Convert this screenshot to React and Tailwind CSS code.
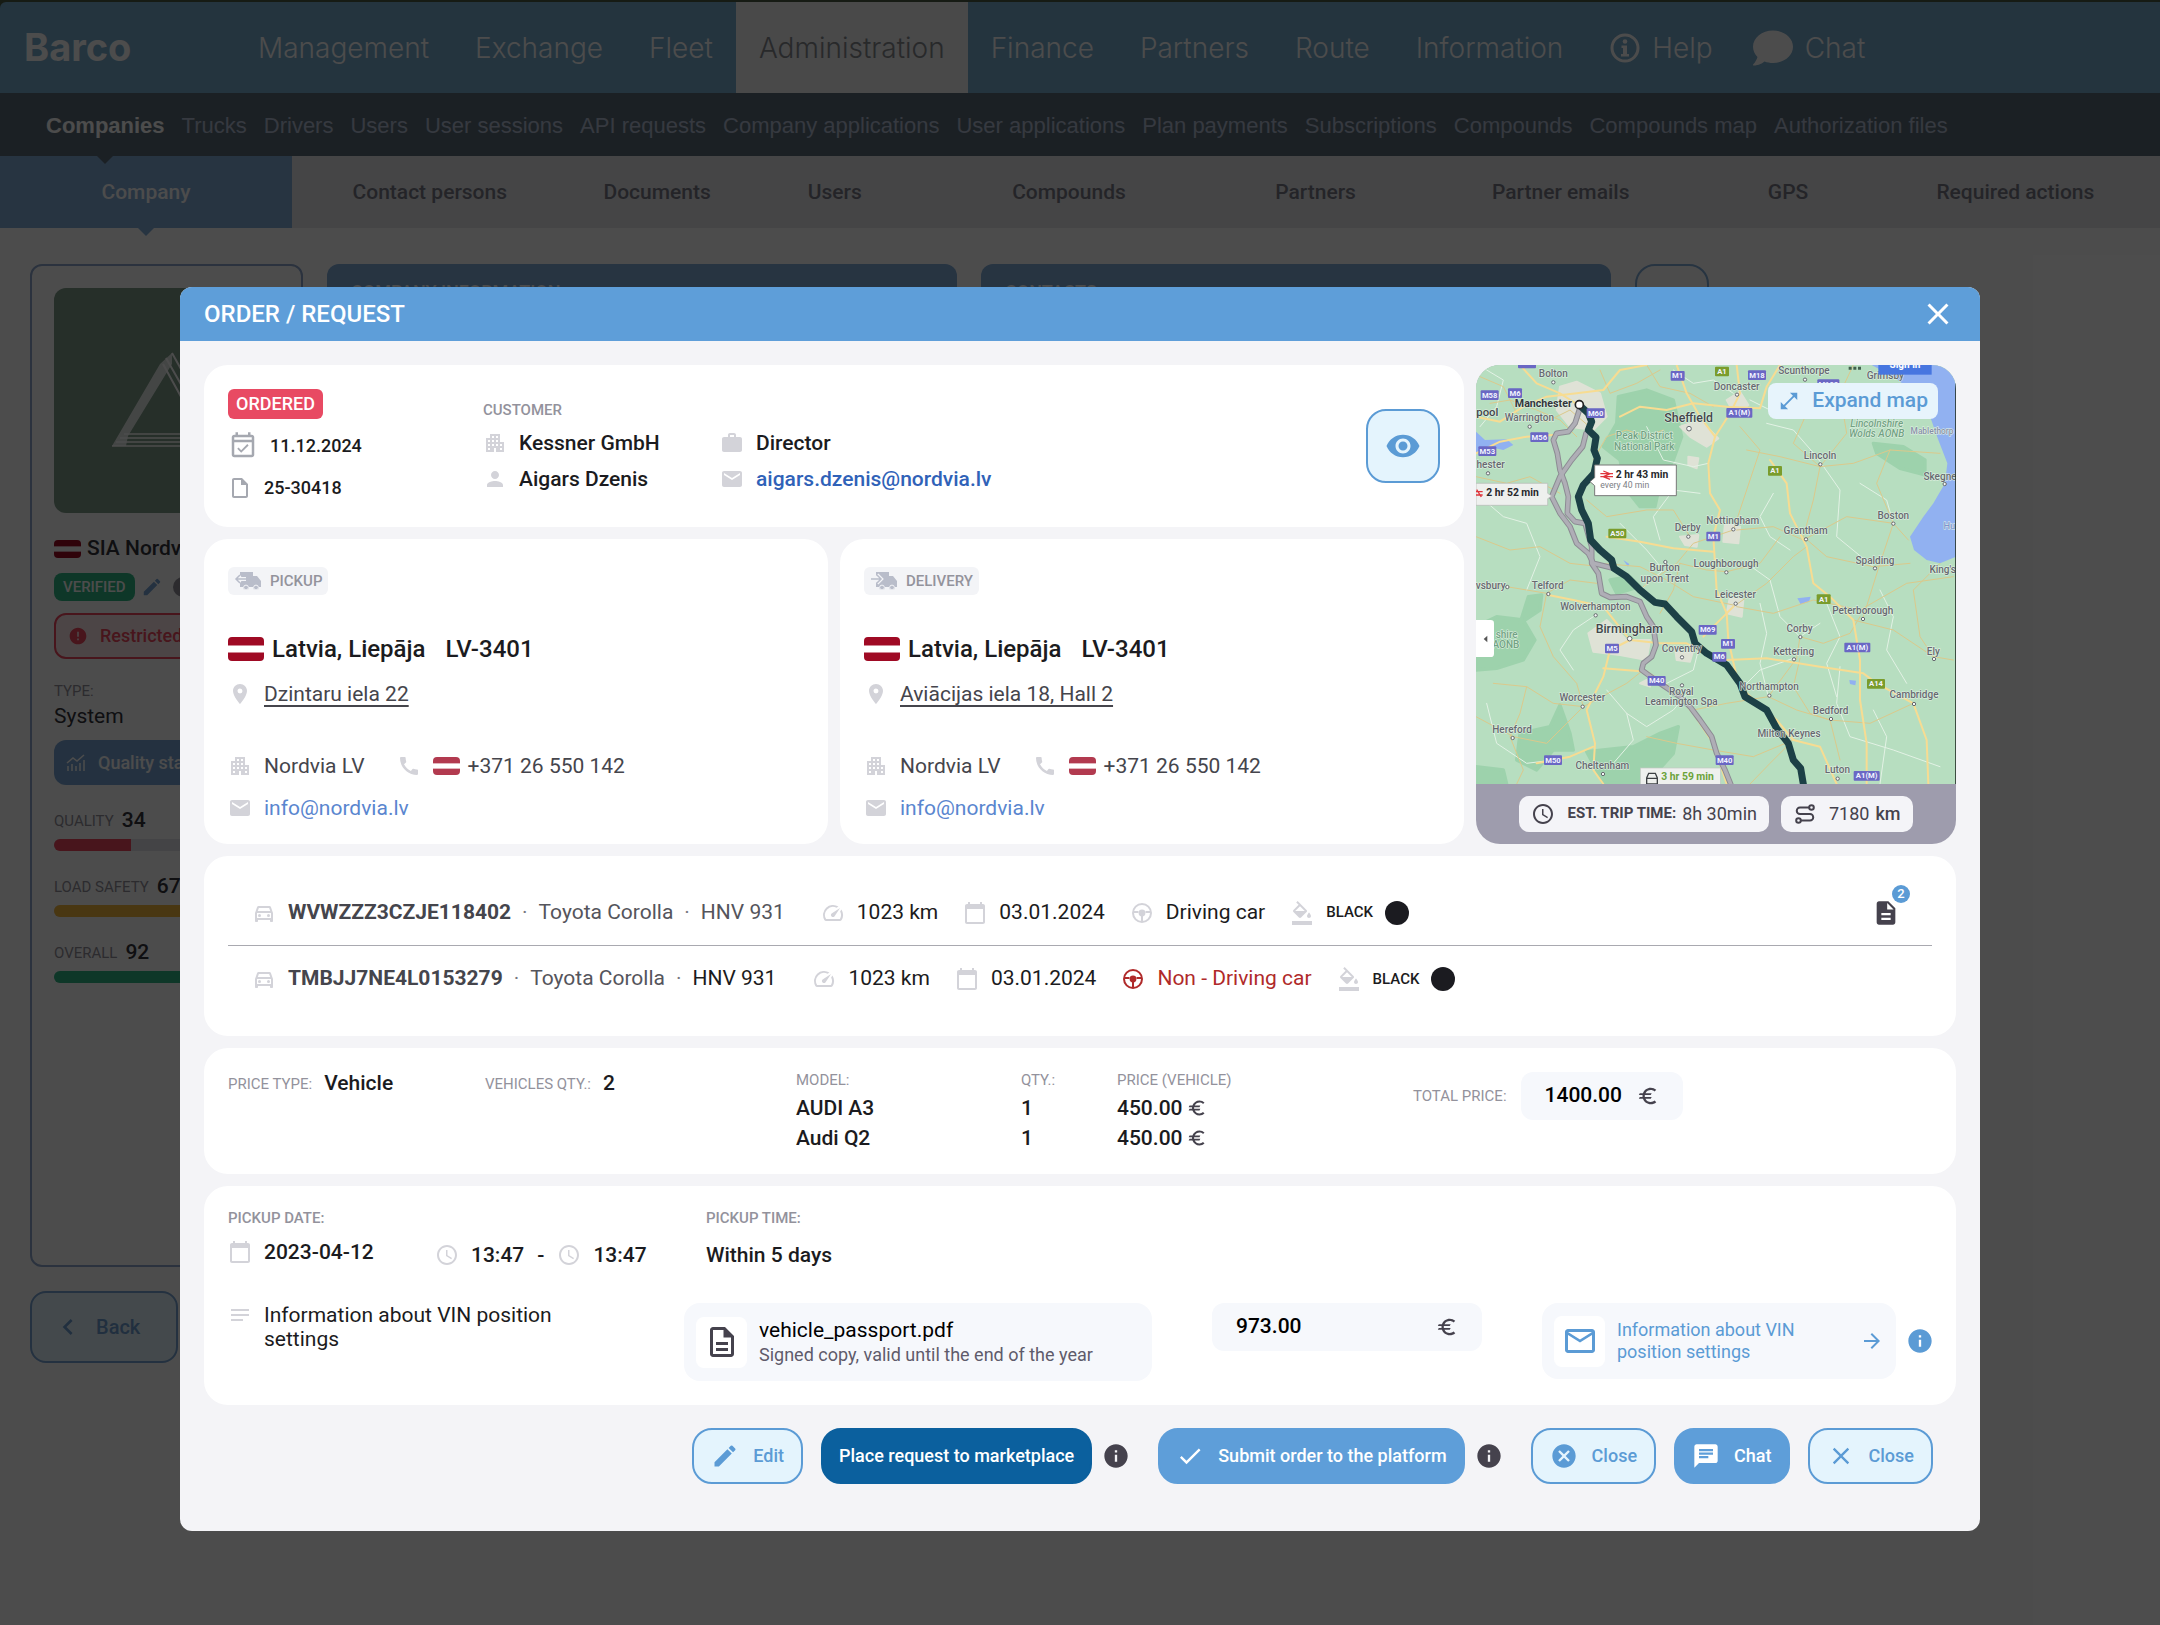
import {
  MdApartment,
  MdArrowForward,
  MdCalendarToday,
  MdCall,
  MdCancel,
  MdChat,
  MdCheck,
  MdChevronLeft,
  MdClose,
  MdDescription,
  MdEdit,
  MdEmail,
  MdError,
  MdEuro,
  MdFormatColorFill,
  MdInfo,
  MdLocationOn,
  MdNotes,
  MdOpenInFull,
  MdOutlineDescription,
  MdOutlineDirectionsCar,
  MdOutlineEmail,
  MdOutlineEventAvailable,
  MdOutlineInsertDriveFile,
  MdPerson,
  MdSchedule,
  MdSpeed,
  MdVisibility,
  MdWork,
} from "react-icons/md";
import { FaComment } from "react-icons/fa";
import clsx from "clsx";

const mainNav = [
  "Management",
  "Exchange",
  "Fleet",
  "Administration",
  "Finance",
  "Partners",
  "Route",
  "Information",
];

const subNav = [
  "Companies",
  "Trucks",
  "Drivers",
  "Users",
  "User sessions",
  "API requests",
  "Company applications",
  "User applications",
  "Plan payments",
  "Subscriptions",
  "Compounds",
  "Compounds map",
  "Authorization files",
];

const tabs = [
  "Company",
  "Contact persons",
  "Documents",
  "Users",
  "Compounds",
  "Partners",
  "Partner emails",
  "GPS",
  "Required actions",
];

const scores = [
  { label: "QUALITY", value: 34, color: "bg-[#f0485f]" },
  { label: "LOAD SAFETY", value: 67, color: "bg-[#f5b83d]" },
  { label: "OVERALL", value: 92, color: "bg-[#2fb985]" },
];

const vehicles = [
  { vin: "WVWZZZ3CZJE118402", model: "Toyota Corolla", plate: "HNV 931", driving: true, files: 2 },
  { vin: "TMBJJ7NE4L0153279", model: "Toyota Corolla", plate: "HNV 931", driving: false, files: 0 },
];

const prices = [
  { model: "AUDI A3", qty: 1, price: "450.00" },
  { model: "Audi Q2", qty: 1, price: "450.00" },
];

/* ---------- small drawings ---------- */

function Flag({ className }) {
  return (
    <svg viewBox="0 0 36 24" preserveAspectRatio="none" className={clsx("shrink-0 rounded-sm", className)}>
      <rect width="36" height="24" fill="#9f0a24" />
      <rect y="8.5" width="36" height="7" fill="#fff" />
    </svg>
  );
}

function SteeringIcon({ className }) {
  return (
    <svg viewBox="0 0 24 24" fill="none" className={className}>
      <circle cx="12" cy="12" r="9" stroke="currentColor" strokeWidth="2" />
      <circle cx="12" cy="12" r="3.4" fill="currentColor" />
      <path d="M3.5 11h5M15.500 11h5M12 14v6.500" stroke="currentColor" strokeWidth="2" />
    </svg>
  );
}

function TruckIcon({ back }) {
  return (
    <svg viewBox="0 0 28 22" className="h-[22px] w-7" fill="none">
      <path
        d="M6 2h13v4h4l4 5v6h-2a3 3 0 0 1-6 0h-4a3 3 0 0 1-6 0H6z"
        fill="#b9bdca"
      />
      <circle cx="12" cy="17.500" r="2.400" fill="#b9bdca" stroke="#f3f4f7" />
      <circle cx="22" cy="17.500" r="2.400" fill="#b9bdca" stroke="#f3f4f7" />
      <path
        d={back ? "M12 9H2M6 5L2 9l4 4" : "M1 9h10M7 5l4 4-4 4"}
        stroke="#f3f4f7"
        strokeWidth="4"
      />
      <path
        d={back ? "M12 9H2M6 5L2 9l4 4" : "M1 9h10M7 5l4 4-4 4"}
        stroke="#b9bdca"
        strokeWidth="1.500"
      />
    </svg>
  );
}

function RouteIcon() {
  return (
    <svg viewBox="0 0 24 24" className="size-6" fill="none" stroke="#45424d" strokeWidth="2">
      <circle cx="18.500" cy="5.500" r="2.300" />
      <circle cx="5.500" cy="18.500" r="2.300" />
      <path d="M16 5.500H7a3.250 3.250 0 0 0 0 6.500h10a3.250 3.250 0 0 1 0 6.500H8" />
    </svg>
  );
}

function HelpIcon() {
  return (
    <svg viewBox="0 0 30 30" className="size-[30px]" fill="none">
      <circle cx="15" cy="15" r="13" stroke="#fff" strokeWidth="3" />
      <circle cx="15" cy="8.500" r="2.300" fill="#fff" />
      <path d="M11.500 12.500h5.500V21h2v2.500h-8V21h2v-6h-1.500z" fill="#fff" />
    </svg>
  );
}

function CompanyLogo() {
  return (
    <svg viewBox="0 0 225 225" className="aspect-square w-full rounded-xl bg-[#7f9d8a]" fill="none" stroke="#fff">
      <path d="M118 65L106 76L58 158L72 158L74 148L118 76Z" fill="#fff" stroke="none" opacity="0.8" />
      <path d="M118 65l52 93M112 70l50 88M109 76l44 80" strokeWidth="2" />
      <path d="M58 158h112M62 154h106M66 150h98M70 146h90" strokeWidth="1.500" />
    </svg>
  );
}

/* ---------- route map ---------- */

const forests = [
  "M475 140L560 120L640 150L665 260L640 330L600 400L585 470L540 470L500 420L480 330L430 290L470 220Z",
  "M48 830L110 800L190 810L225 870L190 930L110 955L48 960Z",
  "M300 1065L330 1150L340 1200L280 1200L230 1260L170 1230L180 1150L270 1130Z",
  "M1240 280L1330 290L1395 330L1395 375L1320 355L1250 310Z",
  "M380 1205L520 1190L600 1150L655 1130L640 1210L560 1300L430 1300Z",
  "M48 1250L130 1260L140 1302L48 1302Z",
  "M450 690L510 680L540 710L470 730Z",
  "M205 740L245 735L240 780L180 820Z",
];

const towns = [
  "M300 110L350 95L420 130L440 200L400 240L330 230L290 180Z",
  "M660 230L720 210L775 265L740 290L690 260Z",
  "M385 850L440 810L500 870L570 870L560 930L480 915L400 905Z",
  "M795 520L840 530L835 580L790 575Z",
  "M660 560L715 555L710 590L675 585Z",
  "M810 740L850 750L845 800L800 790Z",
  "M800 150L840 125L865 165L825 195Z",
  "M645 895L700 900L690 935L650 930Z",
  "M685 320L715 325L710 355L685 345Z",
  "M540 1000L560 990L570 1010Z",
];

const highways = [
  "M48 200L120 215L190 170L260 140L350 130L430 120L480 60L560 45",
  "M180 45L230 100L300 130L355 165",
  "M48 310L120 275L200 260L280 255",
  "M650 45L680 130L720 200L765 260L745 340L750 430L780 480L760 560L765 640L770 720L800 790L805 870L830 980L860 1030L950 1110L1000 1170L1080 1190L1130 1302",
  "M480 200L540 170L620 180L700 160L800 170L900 175L920 110L960 45",
  "M765 260L810 190L840 130L830 45",
  "M265 735L340 750L430 770L470 820L510 870",
  "M510 870L600 880L680 880L740 915L800 930L920 925L1080 950L1210 970L1250 1000L1360 1060L1400 1170L1405 1302",
  "M510 870L450 900L430 980L380 1080L405 1180L400 1260L430 1302",
  "M430 955L560 965L640 1020L700 1090L760 1180L800 1302",
  "M930 330L980 400L990 490L1040 590L1060 700L1110 740L1180 810L1200 930L1200 1050L1220 1180L1220 1302",
  "M730 860L790 800L820 770",
  "M440 560L540 575L640 595L760 605",
  "M230 1240L330 1220L400 1190",
];

const roads = [
  "M48 380L140 400L210 380L300 430",
  "M48 560L150 600L240 590L330 640L420 650",
  "M560 45L600 110L690 130L760 170",
  "M860 300L960 320L1080 350L1180 340L1290 300L1440 310",
  "M1080 350L1060 450L1030 560L1100 620L1240 650L1350 640",
  "M1080 350L1160 250L1140 130L1180 45",
  "M830 540L940 530L1030 570L1160 500L1300 520L1345 570",
  "M820 770L920 700L1000 620L1040 590",
  "M830 770L940 790L1060 750L1200 780L1340 700L1480 680",
  "M1180 810L1300 840L1420 920L1480 930",
  "M550 710L650 640L700 580L820 540",
  "M100 1000L200 1010L280 1060L370 1070L500 1000L550 960",
  "M48 1100L160 1160L260 1180L370 1070",
  "M700 1080L800 1060L925 1040L1010 925L1020 860",
  "M925 1040L1010 1080L1110 1110L1230 1120L1360 1060",
  "M560 1160L650 1180L760 1200L880 1220L1000 1170",
  "M420 640L540 650L620 690L700 740L820 765",
  "M600 790L640 720L660 640",
  "M690 560L640 480L560 480L440 500L380 450",
  "M840 230L900 300L860 420L820 540",
  "M1440 640L1360 720L1380 860L1420 920",
  "M48 700L140 710L260 730L330 690L410 700",
  "M60 80L130 110L170 190L260 215L330 180L400 240",
  "M90 160L150 150L230 180L300 210L350 260",
  "M420 60L450 130L530 100L600 60",
  "M610 240L560 260L500 240L440 260L400 330",
  "M1000 100L1040 190L1000 280L1080 350",
  "M1290 300L1250 400L1300 520L1260 640L1210 800",
  "M1020 860L1090 880L1170 850L1200 800",
  "M1020 925L1000 1010L1050 1090L1110 1110L1140 1230",
  "M200 1010L180 1090L150 1160L190 1260L170 1302",
  "M260 730L240 830L280 920L350 1000L370 1070",
  "M870 1302L930 1240L990 1180",
  "M660 640L740 660L800 665L900 640L960 560",
];

const lanes = [
  "M60 440L130 500L200 520L240 620L200 720",
  "M560 230L610 330L700 350L745 340",
  "M920 220L1000 240L1070 320L1140 420L1130 560L1240 650",
  "M1200 400L1280 450L1300 520",
  "M480 520L560 600L610 660L540 720",
  "M860 640L930 690L960 800L1020 860L1080 820",
  "M620 1000L700 960L720 880",
  "M840 1020L900 960L1000 925",
  "M1140 950L1130 1060L1170 1160L1300 1200L1440 1250",
  "M80 1060L110 1180L200 1240L280 1230",
  "M500 1090L560 1130L640 1080L700 1010",
  "M1260 720L1300 800L1280 900L1340 1000",
  "M340 960L300 900L340 840L400 800",
  "M990 600L930 560L900 500L940 430",
  "M720 430L640 420L580 500L600 570",
  "M1290 210L1240 180L1180 190L1100 130",
  "M640 60L700 100L760 90L820 130",
  "M80 60L130 90L110 170L60 230",
  "M870 150L950 190L1040 190",
  "M900 760L920 850L900 940L925 1040",
  "M1100 760L1140 860L1100 940L1130 1040",
  "M1240 1080L1280 1160L1260 1302",
  "M460 1240L520 1170L500 1090L440 1020",
];

const altRoutes = [
  "M358 180L345 220L325 245L290 250L280 270L292 310L300 360L315 400L325 440L322 490L345 515L375 520L395 590L395 640L415 670L425 730L450 742L500 740L540 755L560 800L580 830L588 885L575 920L550 940L545 960L600 1000L660 1040L690 1070L720 1110L755 1160L770 1210L795 1260L812 1302",
  "M378 250L368 290L335 330L300 380L275 440L300 490L330 530L350 580L385 610L400 640L460 655",
];

const badges = [
  ["M58", 89, 135], ["M6", 165, 129], ["M1", 653, 77], ["M18", 891, 75], ["A1(M)", 838, 188],
  ["M60", 407, 189], ["M56", 238, 261], ["M53", 82, 303], ["M1", 760, 559], ["M69", 743, 839],
  ["M1", 804, 881], ["M6", 778, 920], ["M5", 456, 895], ["M40", 590, 992], ["M50", 279, 1230],
  ["M40", 794, 1230], ["A1(M)", 1192, 892], ["A1(M)", 1220, 1277], ["M180", 1105, 102],
  ["A1", 786, 64, true], ["A1", 945, 362, true], ["A50", 472, 550, true], ["A1", 1091, 747, true],
  ["A14", 1248, 1001, true],
];

const cities = [
  ["Bolton", 280, 80, 280, 97], ["Warrington", 208, 213, 209, 230], ["hester", 92, 354, 84, 370],
  ["Scunthorpe", 1032, 73, 1035, 89], ["Doncaster", 830, 120, 831, 134], ["Grimsby", 1276, 88],
  ["Lincoln", 1080, 328, 1081, 343], ["Boston", 1300, 506, 1300, 521], ["Skegne", 1440, 390, 1454, 402],
  ["Nottingham", 818, 521, 820, 538], ["Derby", 683, 543, 685, 560], ["Grantham", 1037, 553, 1038, 568],
  ["Spalding", 1245, 642, 1245, 655], ["Loughborough", 798, 652, 799, 667], ["Burton", 614, 664, 616, 636],
  ["upon Trent", 614, 696], ["Leicester", 826, 745, 827, 761], ["Telford", 263, 717, 265, 732],
  ["vsbury", 92, 717, 142, 711], ["Wolverhampton", 406, 780, 407, 796], ["Peterborough", 1208, 792, 1209, 807],
  ["Corby", 1019, 847, 1021, 861], ["Coventry", 665, 906, 666, 922], ["Kettering", 1001, 914, 1002, 928],
  ["Ely", 1420, 915, 1422, 927], ["Northampton", 927, 1021, 928, 1037], ["Royal", 664, 1034, 666, 1006],
  ["Leamington Spa", 664, 1065], ["Worcester", 367, 1054, 368, 1070], ["Cambridge", 1362, 1045, 1362, 1062],
  ["Bedford", 1112, 1093, 1113, 1107], ["Hereford", 156, 1149, 158, 1164], ["Milton Keynes", 987, 1161],
  ["Cheltenham", 427, 1256, 429, 1272], ["Luton", 1132, 1270, 1133, 1286], ["King's", 1448, 669],
];

function RouteMap() {
  return (
    <svg viewBox="48 45 1440 1257" className="block w-full bg-[#b7dec0]" preserveAspectRatio="xMidYMid slice" fontFamily="Roboto, sans-serif">
      <rect x="48" y="45" width="1440" height="1257" fill="#b7dec0" />
      {forests.map((d) => <path key={d} d={d} fill="#9dd2ac" stroke="#9dd2ac" strokeWidth="10" strokeLinejoin="round" />)}
      <path
        d="M1235 45L1300 80L1340 110L1400 170L1435 270L1462 340L1455 400L1420 460L1390 500L1350 560L1362 600L1400 630L1440 640L1488 620V45Z"
        fill="#91b1f1"
      />
      <path d="M48 245L75 270L140 268L160 285L130 300L85 290L48 310Z" fill="#91b1f1" />
      <path d="M1012 745l40-5l-5 15l-25 8zM1168 990l20 2l-2 14l-16-4zM490 630l18 12l-4 8z" fill="#91b1f1" />
      {towns.map((d) => <path key={d} d={d} fill="#e9e4dc" opacity="0.8" stroke="#e9e4dc" strokeWidth="6" strokeLinejoin="round" />)}
      <g fill="none" strokeLinejoin="round" strokeLinecap="round">
        {lanes.map((d) => <path key={d} d={d} stroke="#e3f2e5" strokeWidth="3" />)}
        {roads.map((d) => <path key={d} d={d} stroke="#dbc98b" strokeWidth="3" />)}
        {highways.map((d) => <path key={d} d={d} stroke="#f7dc92" strokeWidth="6" />)}
        {altRoutes.map((d) => <path key={d} d={d} stroke="#8c8b93" strokeWidth="17" />)}
        {altRoutes.map((d) => <path key={d} d={d} stroke="#afaeb6" strokeWidth="11" />)}
        <path
          d="M358 165L385 190L395 215L385 240L408 262L402 300L412 325L402 370L370 405L355 440L365 480L385 520L392 570L420 600L455 630L462 655L500 680L540 720L585 757L615 762L650 800L695 845L705 880L740 910L800 945L840 1000L855 1040L920 1080L950 1135L985 1180L1000 1230L1022 1255L1030 1302"
          stroke="#1c4046"
          strokeWidth="21"
        />
      </g>
      <rect x="174" y="40" width="54" height="15" rx="3" fill="#6a67c4" />
      {badges.map(([name, x, y, green]) => (
        <g key={name + x + y}>
          <rect x={x - name.length * 6 - 9} y={y - 14} width={name.length * 12 + 18} height="29" rx="3" fill={green ? "#7a9c2c" : "#6a67c4"} />
          <text x={x} y={y + 8} textAnchor="middle" fontSize="23" fontWeight="700" fill="#f1f3ff">{name}</text>
        </g>
      ))}
      <g textAnchor="middle" fontSize="30" fontWeight="500" fill="#66696f" stroke="#e4f3e7" strokeWidth="3" paintOrder="stroke">
        {cities.map(([name, x, y]) => <text key={name} x={x} y={y}>{name}</text>)}
        <text x="82" y="197" fontSize="34" fill="#43464b">pool</text>
        <text x="686" y="216" fontSize="37" fill="#43464b">Sheffield</text>
        <text x="508" y="848" fontSize="37" fill="#43464b">Birmingham</text>
        <text x="250" y="172" fontSize="32" fontWeight="700" fill="#33363b">Manchester</text>
        <text x="1416" y="252" fontSize="25" fill="#8790a6">Mablethorp</text>
        <text x="1468" y="538" fontSize="28" fill="#7d93cf">Hu</text>
        <g fill="#72a283">
          <text x="553" y="266">Peak District</text>
          <text x="553" y="299">National Park</text>
          <text x="140" y="863">shire</text>
          <text x="138" y="895">AONB</text>
          <text x="1250" y="230" fontStyle="italic">Lincolnshire</text>
          <text x="1250" y="262" fontStyle="italic">Wolds AONB</text>
        </g>
      </g>
      <g fill="#f5f7f5" stroke="#66696f" strokeWidth="3">
        {cities.filter((city) => city[3]).map(([name, , , x, y]) => <circle key={name} cx={x} cy={y} r="5" />)}
        <circle cx="687" cy="236" r="7" />
        <circle cx="509" cy="866" r="7" />
        <circle cx="358" cy="164" r="12" stroke="#222" strokeWidth="5" fill="#fff" />
      </g>

      <path d="M48 400h215v30l12 8l-12 8v20H48z" fill="#eef0ee" stroke="#b5b8b5" strokeWidth="2" />
      <path d="M44 425h24M44 435h24M50 419l14 22" stroke="#e0343c" strokeWidth="4" />
      <text x="79" y="439" fontSize="31" fontWeight="700" fill="#26282b">2 hr 52 min</text>

      <path d="M404 345h245v92H404v-30l-14-12l14-12z" fill="#fff" stroke="#777" strokeWidth="3" />
      <path d="M421 371h38M421 380h38M430 363l20 8l-20 9l20 8" stroke="#e0343c" strokeWidth="4" fill="none" />
      <text x="467" y="384" fontSize="31" fontWeight="700" fill="#26282b">2 hr 43 min</text>
      <text x="421" y="415" fontSize="26" fill="#7b7e84">every 40 min</text>

      <rect x="541" y="1254" width="240" height="60" fill="#eef0ee" stroke="#c3c6c3" strokeWidth="2" />
      <path d="M560 1302v-18l6-14h20l6 14v18zM562 1285h28" stroke="#3c4043" strokeWidth="4" fill="none" />
      <text x="604" y="1290" fontSize="31" fontWeight="700" fill="#6ba33a">3 hr 59 min</text>

      <path d="M48 810h44q10 0 10 10v91q0 10-10 10H48z" fill="#fff" />
      <path d="M82 857v20l-11-10z" fill="#555" />
      <rect x="1255" y="30" width="160" height="44" fill="#4776e0" />
      <text x="1335" y="55" textAnchor="middle" fontSize="30" fontWeight="700" fill="#fff">Sign in</text>
      <path d="M1166 50h9v9h-9zM1180 50h9v9h-9zM1194 50h9v9h-9z" fill="#41604c" />
      <path d="M1487 100V1302" stroke="#26332b" strokeWidth="3" />
    </svg>
  );
}

/* ---------- shared parts ---------- */

function Card({ className, children }) {
  return <section className={clsx("rounded-3xl bg-white", className)}>{children}</section>;
}

function Label({ className, children }) {
  return <span className={clsx("text-[15px] leading-5 text-[#93929c]", className)}>{children}</span>;
}

function Row({ icon: Icon, className, children }) {
  return (
    <div className={clsx("flex items-center gap-3", className)}>
      <Icon className="size-6 shrink-0 text-[#d3d3d9]" />
      {children}
    </div>
  );
}

function ActionButton({ icon: Icon, variant = "light", children }) {
  return (
    <button
      type="button"
      className={clsx(
        "flex h-14 items-center gap-3.5 rounded-[20px] border-2 text-lg font-medium",
        variant === "light" && "border-[#5b9bd5] bg-[#e4f4fd] px-[17px] text-[#5b9bd5]",
        variant === "blue" && "border-[#5e9ed9] bg-[#5e9ed9] px-4 text-white",
        variant === "dark" && "border-[#0b609e] bg-[#0b609e] px-4 text-white"
      )}
    >
      {Icon && <Icon className="size-7" />}
      {children}
    </button>
  );
}

function InfoButton({ className }) {
  return (
    <button type="button" aria-label="More information" className={className}>
      <MdInfo className="size-7" />
    </button>
  );
}

function MoneyInput({ id, label, value, className }) {
  return (
    <div className={clsx("flex h-12 items-center rounded-xl bg-[#f6f8fc] px-6", className)}>
      <input
        id={id}
        aria-label={label}
        defaultValue={value}
        className="w-0 min-w-0 flex-1 bg-transparent text-[21px] font-medium text-black outline-none"
      />
      <MdEuro className="size-[22px] shrink-0 text-[#45424d]" />
    </div>
  );
}

/* ---------- page behind the dialog ---------- */

function Header() {
  return (
    <header>
      <div className="bg-[#4b5b45] pt-0.5">
        <div className="flex h-[91px] items-center rounded-tl-md bg-[#78adcf] font-[Inter,sans-serif] text-[28px] font-light text-white">
          <a href="#home" className="w-[235px] pl-6 text-[38px] font-bold">Barco</a>
          {mainNav.map((item) => (
            <a
              key={item}
              href={`#${item}`}
              className={clsx(
                "flex h-full items-center px-[23px]",
                item === "Administration" && "bg-[#f3f3f6] text-[#88898e]"
              )}
            >
              {item}
            </a>
          ))}
          <a href="#help" className="flex items-center gap-3 px-6">
            <HelpIcon />
            Help
          </a>
          <a href="#chat" className="flex items-center gap-3 px-4">
            <FaComment className="size-10" />
            Chat
          </a>
        </div>
      </div>
      <nav className="flex h-[63px] items-center gap-[17px] bg-[#5d6d7a] pl-[46px] font-['Liberation_Sans',sans-serif] text-[22px] text-[#b4c0d6]">
        {subNav.map((item, index) => (
          <a
            key={item}
            href={`#${item}`}
            className={clsx("relative flex h-full items-center pt-0.5", index === 0 && "font-bold text-white")}
          >
            {item}
            {index === 0 && (
              <span className="absolute top-full left-1/2 z-10 -translate-x-1/2 border-x-8 border-t-8 border-x-transparent border-t-[#5d6d7a]" />
            )}
          </a>
        ))}
      </nav>
      <nav className="grid h-[72px] grid-cols-[212fr_200fr_130fr_128fr_212fr_146fr_210fr_120fr_210fr] bg-[#e6e8ec] text-[21px] font-medium text-[#7b7b87]">
        {tabs.map((item, index) => (
          <a
            key={item}
            href={`#${item}`}
            className={clsx(
              "relative flex items-center justify-center pt-0.5",
              index === 0 && "bg-[#82aedb] text-white"
            )}
          >
            {item}
            {index === 0 && (
              <span className="absolute top-full left-1/2 -translate-x-1/2 border-x-8 border-t-8 border-x-transparent border-t-[#82aedb]" />
            )}
          </a>
        ))}
      </nav>
    </header>
  );
}

function CompanySidebar() {
  return (
    <aside className="flex w-[273px] flex-col">
      <div className="min-h-[1003px] rounded-xl border-2 border-[#8fa9cf] p-[22px]">
        <CompanyLogo />
        <div className="mt-5 flex h-8 items-center gap-1.5 overflow-hidden text-[21px] font-medium whitespace-nowrap text-[#33333b]">
          <Flag className="h-[18px] w-[27px]" />
          SIA Nordvia LV
        </div>
        <div className="mt-2 flex h-7 items-center gap-1.5">
          <span className="rounded-lg bg-[#2fb985] px-[9px] text-[15px] leading-7 font-medium text-white">VERIFIED</span>
          <MdEdit className="size-[22px] text-[#7aa6d6]" />
          <span className="ml-1 size-5 rounded-full bg-[#93929c]" />
        </div>
        <div className="mt-3 flex h-[46px] items-center gap-3 rounded-xl border-2 border-[#f0485f] bg-[#fde8eb] px-3 text-lg font-medium text-[#f0485f]">
          <MdError className="size-5" />
          Restricted
        </div>
        <p className="mt-6 text-[15px] leading-4 text-[#93929c]">TYPE:</p>
        <p className="mt-[3px] text-[21px] leading-7 text-[#33333b]">System</p>
        <button type="button" className="mt-2.5 flex h-[45px] w-full items-center gap-3 rounded-xl bg-[#7aa6d6] px-3 text-lg font-medium text-white">
          <svg viewBox="0 0 20 20" className="size-5" fill="none" stroke="currentColor" strokeWidth="1.500">
            <path d="M1 10l6-5l4 3l7-6M2 18v-5M6 18v-7M10 18v-5M14 18v-8M18 18V7" />
          </svg>
          Quality stats
        </button>
        {scores.map((score) => (
          <div key={score.label} className="mt-[22px]">
            <p className="flex h-7 items-center gap-2 text-[15px] text-[#93929c]">
              {score.label}
              <b className="text-[21px] font-medium text-[#33333b]">{score.value}</b>
            </p>
            <div className="mt-1 h-3 overflow-hidden rounded-full bg-[#e3e4ea]">
              <div className={clsx("h-full", score.color)} style={{ width: `${score.value}%` }} />
            </div>
          </div>
        ))}
      </div>
      <button type="button" className="mt-6 flex h-[72px] w-[148px] items-center gap-3 rounded-2xl border-2 border-[#7aa6d6] bg-[#e4f4fd] pl-5 text-xl font-medium text-[#6f9fd3]">
        <MdChevronLeft className="size-8" />
        Back
      </button>
    </aside>
  );
}

/* ---------- dialog sections ---------- */

function SummaryCard() {
  return (
    <Card className="flex items-center p-6">
      <div className="flex w-[255px] flex-col gap-3 text-lg font-medium text-[#1b1b20]">
        <span className="w-fit rounded-md bg-[#e84a63] px-2 leading-[30px] text-white">ORDERED</span>
        <div className="flex h-[30px] items-center gap-3">
          <MdOutlineEventAvailable className="size-[30px] text-[#a5a8b0]" />
          11.12.2024
        </div>
        <div className="flex h-[30px] items-center gap-3">
          <MdOutlineInsertDriveFile className="size-6 text-[#a5a8b0]" />
          25-30418
        </div>
      </div>
      <div className="pt-0.5 text-[21px] font-medium text-[#1b1b20]">
        <Label className="block">CUSTOMER</Label>
        <div className="mt-2 grid grid-cols-[237px_auto] gap-y-1.5 leading-[30px]">
          <Row icon={MdApartment}>Kessner GmbH</Row>
          <Row icon={MdWork}>Director</Row>
          <Row icon={MdPerson}>Aigars Dzenis</Row>
          <Row icon={MdEmail}>
            <a href="mailto:aigars.dzenis@nordvia.lv" className="text-[#3062b8]">aigars.dzenis@nordvia.lv</a>
          </Row>
        </div>
      </div>
      <button
        type="button"
        aria-label="View customer"
        className="ml-auto flex size-[74px] items-center justify-center rounded-[20px] border-2 border-[#5b9bd5] bg-[#e4f4fd] text-[#5b9bd5]"
      >
        <MdVisibility className="size-9" />
      </button>
    </Card>
  );
}

function AddressCard({ type, address, back }) {
  return (
    <Card className="px-6 pt-7 pb-[21px]">
      <div className="flex h-7 w-fit items-center gap-2 rounded-md bg-[#f3f4f7] px-1.5 text-[15px] font-medium text-[#93939c]">
        <TruckIcon back={back} />
        {type}
      </div>
      <div className="mt-[38px] flex h-8 items-center gap-2 text-2xl font-medium text-[#1b1b20]">
        <Flag className="h-6 w-9" />
        Latvia, Liepāja
        <span className="ml-3">LV-3401</span>
      </div>
      <div className="text-[21px] leading-[30px] text-[#45454c]">
        <Row icon={MdLocationOn} className="mt-3.5">
          <a href="#map" className="underline underline-offset-4">{address}</a>
        </Row>
        <div className="mt-[42px] flex items-center gap-8">
          <Row icon={MdApartment}>Nordvia LV</Row>
          <Row icon={MdCall}>
            <span className="flex items-center gap-2">
              <Flag className="h-[18px] w-[27px] opacity-80" />
              +371 26 550 142
            </span>
          </Row>
        </div>
        <Row icon={MdEmail} className="mt-3">
          <a href="mailto:info@nordvia.lv" className="text-[#5a86cf]">info@nordvia.lv</a>
        </Row>
      </div>
    </Card>
  );
}

function MapCard() {
  return (
    <section className="relative flex flex-col overflow-hidden rounded-3xl bg-[#9e9cad]">
      <RouteMap />
      <button
        type="button"
        className="absolute top-[18px] right-[18px] flex h-9 items-center gap-3 rounded-lg bg-[#e7f4fc] px-2.5 text-[21px] font-medium text-[#5b9bd5]"
      >
        <MdOpenInFull className="size-[22px]" />
        Expand map
      </button>
      <div className="flex flex-1 items-center justify-center gap-3 text-lg text-[#45424d]">
        <div className="flex h-9 items-center rounded-[10px] bg-[#f4f4f8] px-3">
          <MdSchedule className="size-6" />
          <span className="ml-3 text-[15px] font-bold">EST. TRIP TIME:</span>
          <span className="ml-1.5">8h 30min</span>
        </div>
        <div className="flex h-9 items-center rounded-[10px] bg-[#f4f4f8] px-3">
          <RouteIcon />
          <span className="ml-3">7180</span>
          <span className="ml-1.5 font-medium">km</span>
        </div>
      </div>
    </section>
  );
}

function VehicleRow({ vehicle }) {
  return (
    <li className="flex h-[66px] items-center px-6 text-[21px] text-[#1b1b20]">
      <Row icon={MdOutlineDirectionsCar}>
        <span className="font-bold text-[#45454c]">{vehicle.vin}</span>
      </Row>
      <span className="mx-[11px] text-[#77777f]">·</span>
      <span className="text-[#55555c]">{vehicle.model}</span>
      <span className="mx-[11px] text-[#77777f]">·</span>
      <span className={vehicle.driving ? "text-[#55555c]" : ""}>{vehicle.plate}</span>
      <div className="ml-9 flex items-center gap-[25px]">
        <Row icon={MdSpeed}>1023 km</Row>
        <Row icon={MdCalendarToday}>03.01.2024</Row>
        <span className={clsx("flex items-center gap-3", !vehicle.driving && "text-[#b02a2a]")}>
          <SteeringIcon className={clsx("size-6", vehicle.driving && "text-[#d3d3d9]")} />
          {vehicle.driving ? "Driving car" : "Non - Driving car"}
        </span>
        <Row icon={MdFormatColorFill}>
          <span className="text-[15px] font-medium">BLACK</span>
          <span className="size-6 rounded-full bg-[#1b1b20]" />
        </Row>
      </div>
      {vehicle.files > 0 && (
        <button type="button" aria-label="Documents" className="relative mr-2 ml-auto">
          <MdDescription className="size-7 text-[#45424d]" />
          <span className="absolute -top-3.5 -right-2.5 flex size-[18px] items-center justify-center rounded-full bg-[#5b9bd5] text-[13px] font-medium text-white">
            {vehicle.files}
          </span>
        </button>
      )}
    </li>
  );
}

function PriceCard() {
  return (
    <Card className="grid h-[126px] grid-cols-[257fr_311fr_617fr_519fr] px-6 pt-5 text-[21px] font-medium text-[#1b1b20]">
      <div className="flex h-8 items-center gap-3">
        <Label className="font-normal">PRICE TYPE:</Label>
        Vehicle
      </div>
      <div className="flex h-8 items-center gap-3">
        <Label className="font-normal">VEHICLES QTY.:</Label>
        2
      </div>
      <table className="h-fit w-fit text-left">
        <thead className="text-[15px] leading-[25px] text-[#93929c]">
          <tr>
            <th className="w-[225px] p-0 font-normal">MODEL:</th>
            <th className="w-24 p-0 font-normal">QTY.:</th>
            <th className="p-0 font-normal">PRICE (VEHICLE)</th>
          </tr>
        </thead>
        <tbody className="leading-[30px]">
          {prices.map((line) => (
            <tr key={line.model}>
              <td className="p-0">{line.model}</td>
              <td className="p-0">{line.qty}</td>
              <td className="p-0">
                <span className="flex items-center gap-1">
                  {line.price}
                  <MdEuro className="size-5 text-[#45424d]" />
                </span>
              </td>
            </tr>
          ))}
        </tbody>
      </table>
      <div className="mt-1 flex h-12 items-center gap-3.5">
        <label htmlFor="total-price" className="text-[15px] font-normal text-[#93929c]">TOTAL PRICE:</label>
        <MoneyInput id="total-price" value="1400.00" className="w-[162px]" />
      </div>
    </Card>
  );
}

function PickupCard() {
  return (
    <Card className="h-[219px] px-6 pt-5 text-[21px] text-[#1b1b20]">
      <div className="flex font-medium">
        <div className="w-[207px]">
          <Label className="block leading-6 font-medium">PICKUP DATE:</Label>
          <Row icon={MdCalendarToday} className="mt-[7px] leading-[30px]">2023-04-12</Row>
        </div>
        <div className="mt-[34px] flex w-[271px] items-center gap-[13px] self-start leading-[30px]">
          <Row icon={MdSchedule}>13:47</Row>
          -
          <Row icon={MdSchedule}>13:47</Row>
        </div>
        <div>
          <Label className="block leading-6 font-medium">PICKUP TIME:</Label>
          <p className="mt-2.5 leading-[30px]">Within 5 days</p>
        </div>
      </div>
      <div className="mt-[33px] flex items-start">
        <div className="flex w-[456px] gap-3 leading-6">
          <MdNotes className="size-6 shrink-0 text-[#d3d3d9]" />
          <p className="w-[300px]">Information about VIN position settings</p>
        </div>
        <div className="flex h-[78px] w-[468px] items-center gap-3 rounded-2xl bg-[#f6f8fc] px-3">
          <span className="flex size-[51px] items-center justify-center rounded-lg bg-white">
            <MdOutlineDescription className="size-9 text-[#45424d]" />
          </span>
          <div>
            <p className="leading-[26px] text-black">vehicle_passport.pdf</p>
            <p className="text-lg leading-6 text-[#5f5b6b]">Signed copy, valid until the end of the year</p>
          </div>
        </div>
        <MoneyInput label="Amount" value="973.00" className="ml-[60px] w-[270px]" />
        <div className="ml-auto flex items-center gap-2.5 text-[#5b9bd5]">
          <a href="#vin" className="flex h-[76px] w-[354px] items-center gap-3 rounded-2xl bg-[#f6f8fc] px-3">
            <span className="flex size-[51px] shrink-0 items-center justify-center rounded-lg bg-white">
              <MdOutlineEmail className="size-9" />
            </span>
            <span className="w-[200px] text-lg leading-[22px]">Information about VIN position settings</span>
            <MdArrowForward className="ml-auto size-6" />
          </a>
          <InfoButton className="-mr-0.5" />
        </div>
      </div>
    </Card>
  );
}

function OrderDialog() {
  return (
    <div role="dialog" aria-label="Order / Request" className="overflow-hidden rounded-xl bg-[#f4f4f7]">
      <div className="flex h-[54px] items-center justify-between bg-[#5e9ed9] px-6 text-white">
        <h1 className="text-2xl font-medium">ORDER / REQUEST</h1>
        <button type="button" aria-label="Close dialog">
          <MdClose className="size-9" />
        </button>
      </div>
      <div className="flex flex-col gap-3 px-6 pt-6">
        <div className="grid grid-cols-[1fr_480px] gap-3">
          <div className="flex flex-col gap-3">
            <SummaryCard />
            <div className="grid flex-1 grid-cols-2 gap-3">
              <AddressCard type="PICKUP" address="Dzintaru iela 22" back />
              <AddressCard type="DELIVERY" address="Aviācijas iela 18, Hall 2" />
            </div>
          </div>
          <MapCard />
        </div>
        <Card className="p-6">
          <ul className="divide-y divide-[#a9a9b0]">
            {vehicles.map((vehicle) => (
              <VehicleRow key={vehicle.vin} vehicle={vehicle} />
            ))}
          </ul>
        </Card>
        <PriceCard />
        <PickupCard />
      </div>
      <div className="flex items-center justify-end gap-[18px] px-[47px] pt-[23px] pb-[47px]">
        <ActionButton icon={MdEdit}>Edit</ActionButton>
        <div className="mr-2.5 flex items-center gap-2.5">
          <ActionButton variant="dark">Place request to marketplace</ActionButton>
          <InfoButton className="text-[#45424d]" />
        </div>
        <div className="mr-2.5 flex items-center gap-2.5">
          <ActionButton icon={MdCheck} variant="blue">Submit order to the platform</ActionButton>
          <InfoButton className="text-[#45424d]" />
        </div>
        <ActionButton icon={MdCancel}>Close</ActionButton>
        <ActionButton icon={MdChat} variant="blue">Chat</ActionButton>
        <ActionButton icon={MdClose}>Close</ActionButton>
      </div>
    </div>
  );
}

export default function App() {
  return (
    <div className="relative min-h-screen bg-white font-[Roboto,sans-serif]">
      <Header />
      <main className="flex items-start gap-6 px-[30px] pt-9">
        <CompanySidebar />
        <h2 className="h-20 w-[630px] rounded-t-xl bg-[#82aedb] px-6 pt-3.5 text-lg font-medium text-white">COMPANY INFORMATION</h2>
        <h2 className="h-20 w-[630px] rounded-t-xl bg-[#82aedb] px-6 pt-3.5 text-lg font-medium text-white">CONTACTS</h2>
        <button type="button" aria-label="Edit company" className="size-[74px] rounded-[20px] border-2 border-[#82aedb]" />
      </main>
      <div className="absolute inset-0 z-20 bg-black/70 px-45 pt-[287px]">
        <OrderDialog />
      </div>
    </div>
  );
}
